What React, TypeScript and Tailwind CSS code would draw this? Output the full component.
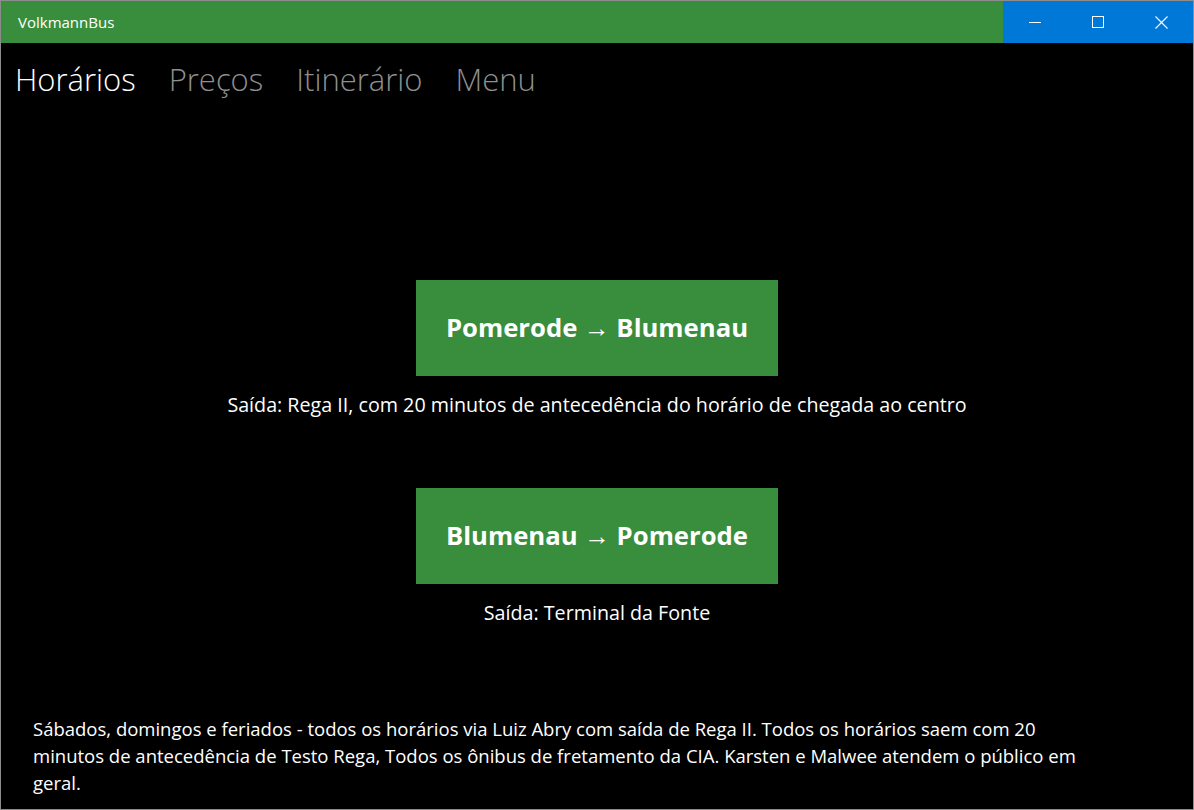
import React from "react";

const font = { fontFamily: '"Segoe UI", "Open Sans", "Noto Sans", sans-serif' };

const routes = [
  {
    label: "Pomerode → Blumenau",
    note: "Saída: Rega II, com 20 minutos de antecedência do horário de chegada ao centro",
  },
  { label: "Blumenau → Pomerode", note: "Saída: Terminal da Fonte" },
];

const tabs = ["Horários", "Preços", "Itinerário", "Menu"];

export default function App() {
  return (
    <div
      className="flex h-[810px] w-[1194px] flex-col overflow-hidden border border-[#8c8c8c] bg-black text-white"
      style={font}
    >
      {/* Title bar */}
      <div className="flex h-[42px] shrink-0 items-stretch bg-[#388e3c]">
        <div className="flex flex-1 items-center pl-[17px] text-[15px] font-medium leading-none">VolkmannBus</div>
        <div className="flex bg-[#0078d7]">
          <button className="flex w-[63px] items-center justify-center">
            <svg width="12" height="12" viewBox="0 0 12 12">
              <path d="M0 6.5h12" stroke="white" strokeWidth="1" />
            </svg>
          </button>
          <button className="flex w-[63px] items-center justify-center">
            <svg width="12" height="12" viewBox="0 0 12 12">
              <rect x="0.5" y="0.5" width="11" height="11" fill="none" stroke="white" strokeWidth="1" />
            </svg>
          </button>
          <button className="flex w-[64px] items-center justify-center">
            <svg width="13" height="13" viewBox="0 0 13 13">
              <path d="M0.5 0.5l12 12M12.5 0.5l-12 12" stroke="white" strokeWidth="1.1" />
            </svg>
          </button>
        </div>
      </div>

      {/* Pivot headers */}
      <div className="flex gap-[33px] pl-[14px] pt-[15px] text-[31px] font-light leading-[42px]">
        {tabs.map((t, i) => (
          <span key={t} className={i === 0 ? "text-white" : "text-[#8f8f8f]"}>
            {t}
          </span>
        ))}
      </div>

      {/* Route buttons */}
      <div className="mt-[180px] flex flex-col items-center">
        {routes.map((r, i) => (
          <div key={r.label} className={`flex flex-col items-center ${i > 0 ? "mt-[70px]" : ""}`}>
            <button className="flex h-[96px] w-[362px] items-center justify-center bg-[#388e3c] text-[25.7px] font-bold">
              {r.label}
            </button>
            <p className="mt-[16px] text-[19.7px] leading-[26px]">{r.note}</p>
          </div>
        ))}
      </div>

      {/* Footer note */}
      <div className="mt-auto w-[1085px] pb-[13px] pl-[32px] text-[18.5px] leading-[27px]">
        Sábados, domingos e feriados - todos os horários via Luiz Abry com saída de Rega II. Todos os horários saem com
        20 minutos de antecedência de Testo Rega, Todos os ônibus de fretamento da CIA. Karsten e Malwee atendem o
        público em geral.
      </div>
    </div>
  );
}
